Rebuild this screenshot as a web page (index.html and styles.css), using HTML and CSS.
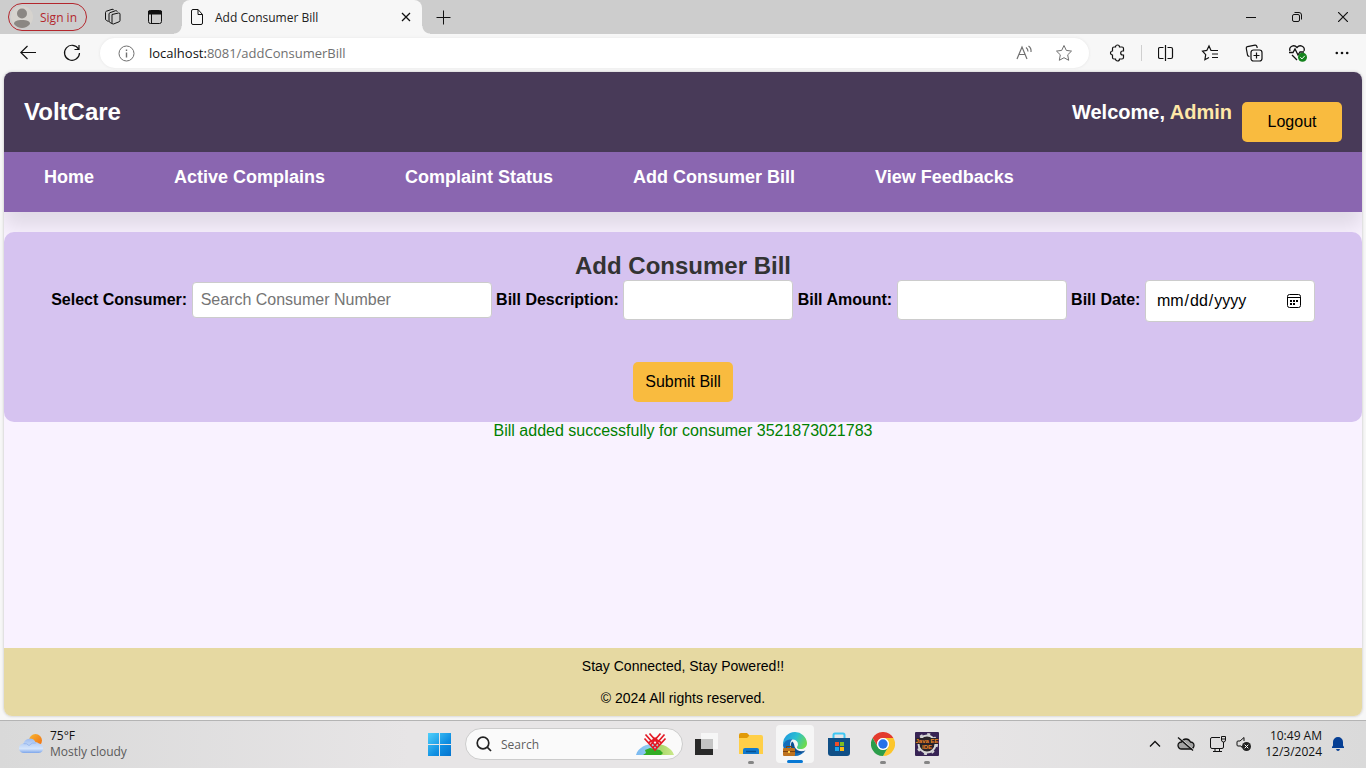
FILE: index.html
```html
<!DOCTYPE html>
<html lang="en">
<head>
<meta charset="utf-8">
<title>Add Consumer Bill</title>
<link rel="stylesheet" href="styles.css">
</head>
<body>
<div class="desktop">
  <div class="tabstrip">
    <button class="signin" type="button">
      <svg width="22" height="22" viewBox="0 0 22 22"><circle cx="11" cy="11" r="11" fill="#d6d3ce"/><circle cx="11" cy="7.500" r="5" fill="#8b8783"/><path d="M3 18c0-3 3-4 8-4s8 1 8 4c-2 2.600-5 4-8 4s-6-1.400-8-4z" fill="#8b8783"/></svg>
      <span>Sign in</span>
    </button>
    <button class="strip-btn" type="button" aria-label="Workspaces">
      <svg class="line" width="18" height="18" viewBox="0 0 18 18"><path d="M8 6.500l6.500-1.500q1.500-.2 1.500 1.200v6.300q0 1-1 1.300l-5.500 2.200q-1.500.4-1.500-1.200z"/><path d="M8 15.500l-2-1q-1-.5-1-1.500V6q0-1 1-1.300l5.500-2q1.500-.3 1.800 1"/><path d="M4.500 13.500l-2-1q-1-.5-1-1.500V4.500q0-1 1-1.300L8 1.300q1.400-.3 1.800.8"/></svg>
    </button>
    <button class="strip-btn" type="button" aria-label="Tab actions">
      <svg class="line" width="16" height="16" viewBox="0 0 16 16"><rect x="1.500" y="1.500" width="13" height="13" rx="2"/><path d="M1.500 2h13v3h-13z" fill="#111"/><path d="M4.500 5v9"/></svg>
    </button>
    <div class="tab">
      <svg class="line" width="14" height="18" viewBox="0 0 14 18"><path d="M1.500 3q0-1.500 1.500-1.500h5l4.500 5V15q0 1.500-1.500 1.500H3q-1.500 0-1.500-1.500zM8 1.500v5h4.500"/></svg>
      <span class="tab-title">Add Consumer Bill</span>
      <button class="plain" type="button" aria-label="Close tab"><svg class="line" width="10" height="10" viewBox="0 0 10 10"><path d="M1 1l8 8M9 1L1 9" stroke-width="1.300"/></svg></button>
    </div>
    <button class="strip-btn" type="button" aria-label="New tab"><svg class="line" width="15" height="15" viewBox="0 0 15 15"><path d="M7.500.5v14M.5 7.500h14"/></svg></button>
    <div class="window-controls">
      <button class="win-btn" type="button" aria-label="Minimize"><svg class="line" width="10" height="10" viewBox="0 0 10 10"><path d="M0 5.500h10"/></svg></button>
      <button class="win-btn" type="button" aria-label="Restore"><svg class="line" width="10" height="10" viewBox="0 0 10 10"><rect x=".5" y="2.500" width="7" height="7" rx="1.500"/><path d="M2.500.5H7Q9.500.5 9.500 3v4.500"/></svg></button>
      <button class="win-btn" type="button" aria-label="Close"><svg class="line" width="10" height="10" viewBox="0 0 10 10"><path d="M0 0l10 10M10 0L0 10" stroke-width="1.200"/></svg></button>
    </div>
  </div>

  <div class="toolbar">
    <button class="tool-btn" type="button" aria-label="Back"><svg class="line" width="16" height="16" viewBox="0 0 16 16"><path d="M7.500 1L.8 7.500l6.700 6.500M1 7.500h15" stroke-width="1.200"/></svg></button>
    <button class="tool-btn" type="button" aria-label="Refresh"><svg class="line" width="18" height="18" viewBox="0 0 18 18"><path d="M15.600 5.200A7.500 7.500 0 1 0 16.500 9M16 1v4.500h-4.500" stroke-width="1.200"/></svg></button>
    <div class="address">
      <svg class="line grey" width="17" height="17" viewBox="0 0 17 17"><circle cx="8.500" cy="8.500" r="7.500"/><path d="M8.500 7.500v5M8.500 4.500v1.500" stroke-width="1.400"/></svg>
      <span class="url"><b>localhost:</b>8081/addConsumerBill</span>
      <svg class="line grey read" width="18" height="16" viewBox="0 0 18 16"><path d="M2 14L7 2l5 12M4 9.500h6M11 2.500q2 1.500 2 4M13.500 1q3 2 2.500 6" stroke-width="1.200"/></svg>
      <svg class="line grey" width="18" height="18" viewBox="0 0 18 18"><path d="M9 1.500l2.300 4.900 5.200.7-3.800 3.700 1 5.500L9 13.700l-4.700 2.600 1-5.500L1.500 7.100l5.200-.7z"/></svg>
    </div>
    <button class="tool-btn" type="button" aria-label="Extensions"><svg class="line" width="18" height="18" viewBox="0 0 18 18"><path d="M6 3h1.500a2 2 0 0 1 4 0h2.500q1.500 0 1.500 1.500V7h-.8a2 2 0 0 0 0 4h.8v2.500q0 1.500-1.500 1.500h-2.500a2 2 0 0 1-4 0H6q-1.500 0-1.500-1.500V11a2 2 0 1 1 0-4V4.500Q4.500 3 6 3z" stroke-width="1.200"/></svg></button>
    <span class="separator"></span>
    <button class="tool-btn" type="button" aria-label="Split screen"><svg class="line" width="16" height="16" viewBox="0 0 16 16"><path d="M5.500 2.500H2Q.5 2.500.5 4v8q0 1.500 1.500 1.500h3.500M9.500 2.500H13q1.500 0 1.500 1.500v8q0 1.500-1.500 1.500H9.500M7.500 0v16" stroke-width="1.200"/></svg></button>
    <button class="tool-btn" type="button" aria-label="Favorites"><svg class="line" width="18" height="18" viewBox="0 0 18 18"><path d="M11.500 6.500H10L8 2 5.800 6.400l-4.300.7 3.200 3.600-.8 5L8 13.400M11.500 6.500H17M11 10h6M11 13.500h6" stroke-width="1.200"/></svg></button>
    <button class="tool-btn" type="button" aria-label="Collections"><svg class="line" width="18" height="18" viewBox="0 0 18 18"><rect x="6" y="6" width="11" height="11" rx="2.500" stroke-width="1.200"/><path d="M11.500 8.500v6M8.500 11.500h6M4.500 12.500q-1.700-.2-2-1.500L1.300 4.500Q1 3 2.500 2.700l7.500-1.500q1.500-.2 1.900 1.300l.3 1.500" stroke-width="1.200"/></svg></button>
    <button class="tool-btn" type="button" aria-label="Browser essentials"><svg class="line" width="20" height="18" viewBox="0 0 20 18"><path d="M2 7C.5 2.500 6 0 9 3.500 12 0 17.500 2.500 16 7M1 8.500h4l2-3.500 3 6 2-3h4M4 11l5 5" stroke-width="1.300"/><circle cx="14.500" cy="13.200" r="4.500" fill="#14831d" stroke="none"/><path d="M12.300 13.300l1.700 1.600 2.800-3.100" stroke="#fff"/></svg></button>
    <button class="tool-btn" type="button" aria-label="Settings"><svg width="14" height="4" viewBox="0 0 14 4" fill="#111"><circle cx="1.800" cy="2" r="1.300"/><circle cx="7" cy="2" r="1.300"/><circle cx="12.200" cy="2" r="1.300"/></svg></button>
  </div>

  <main class="page">
    <header class="site-header">
      <h1 class="logo">VoltCare</h1>
      <p class="welcome">Welcome, <span class="user">Admin</span></p>
      <button class="btn logout" type="button">Logout</button>
    </header>
    <nav class="site-nav">
      <a href="#">Home</a>
      <a href="#">Active Complains</a>
      <a href="#">Complaint Status</a>
      <a href="#">Add Consumer Bill</a>
      <a href="#">View Feedbacks</a>
    </nav>
    <form class="bill-form">
      <h2>Add Consumer Bill</h2>
      <div class="fields">
        <label for="consumer">Select Consumer:</label>
        <input id="consumer" class="search" type="text" placeholder="Search Consumer Number">
        <label for="description">Bill Description:</label>
        <input id="description" class="field" type="text">
        <label for="amount">Bill Amount:</label>
        <input id="amount" class="field" type="text">
        <label for="date">Bill Date:</label>
        <input id="date" class="field date" type="date">
      </div>
      <button class="btn" type="button">Submit Bill</button>
    </form>
    <p class="message">Bill added successfully for consumer 3521873021783</p>
    <footer class="site-footer">
      <p>Stay Connected, Stay Powered!!</p>
      <p>© 2024 All rights reserved.</p>
    </footer>
  </main>

  <div class="taskbar">
    <div class="weather">
      <svg width="26" height="22" viewBox="0 0 26 22">
        <defs><linearGradient id="cloud" x1="0" y1="0" x2="0" y2="1"><stop offset="0" stop-color="#9dbcf0"/><stop offset=".7" stop-color="#d5e5fb"/><stop offset="1" stop-color="#7ea6ea"/></linearGradient><linearGradient id="sun" x1="0" y1="0" x2="1" y2="1"><stop offset="0" stop-color="#f8b731"/><stop offset="1" stop-color="#ef6a10"/></linearGradient></defs>
        <circle cx="17.500" cy="7.500" r="6.500" fill="url(#sun)"/><path d="M6 20a4.800 4.800 0 0 1-.5-9.600A6.500 6.500 0 0 1 17.500 9a5 5 0 0 1 3.500 1.500 4.800 4.800 0 0 1 0 9.500z" fill="url(#cloud)"/><path d="M5.500 10.600q3.500-.6 5.500 1.900 3-3.500 7-2.500" fill="none" stroke="#9ab9ee"/>
      </svg>
      <div class="weather-text"><span>75°F</span><span class="muted">Mostly cloudy</span></div>
    </div>
    <div class="apps">
      <button class="app" type="button" aria-label="Start"><svg width="23" height="23" viewBox="0 0 23 23"><defs><linearGradient id="win" x1="0" y1="0" x2="1" y2="1"><stop offset="0" stop-color="#4fd0fb"/><stop offset=".6" stop-color="#0f8fe2"/><stop offset="1" stop-color="#0573ce"/></linearGradient></defs><path fill="url(#win)" d="M0 0h11v11H0zM12 0h11v11H12zM0 12h11v11H0zM12 12h11v11H12z"/></svg></button>
      <label class="search-box">
        <svg width="16" height="16" viewBox="0 0 16 16" fill="none" stroke="#222" stroke-width="1.700"><circle cx="7" cy="7" r="5.800"/><path d="M11.200 11.200L15 15"/></svg>
        <input type="text" placeholder="Search" aria-label="Search">
        <svg width="38" height="24" viewBox="0 0 38 24"><defs><linearGradient id="globe"><stop offset="0" stop-color="#79b8f1"/><stop offset=".5" stop-color="#9ed5ef"/><stop offset=".65" stop-color="#aad86b"/><stop offset="1" stop-color="#cbe98a"/></linearGradient></defs><path d="M0 23C4 8 33 8 38 23z" fill="url(#globe)"/><path d="M7 23l3-2-1-3 5-2 10 2 3 3-2 2z" fill="#32ad25"/><path d="M8.500 6.500L19 18 29.500 6.500M9.500 2.500L21 15.500M13.500 1.500L23 12.500M28.500 2.500L17 15.500M24.500 1.500L15 12.500M17 5.500l8 5M21 5.500l-8 5" fill="none" stroke="#e31824" stroke-width="1.700"/></svg>
      </label>
      <button class="app" type="button" aria-label="Task view"><svg width="24" height="24" viewBox="0 0 24 24"><path d="M0 7h18v16H0z" fill="#292929"/><path d="M6 1h17v16H6z" fill="#fafafa" opacity=".8"/><path d="M6 7h12v10H6z" fill="#c4c4c4"/></svg></button>
      <button class="app running" type="button" aria-label="File Explorer"><svg width="24" height="24" viewBox="0 0 24 24"><path d="M0 3q0-2 2-2h6l3 3-3 3H0z" fill="#e19a08"/><path d="M0 6h8l3-3h11q2 0 2 2v17H0z" fill="#ffcf48"/><path d="M4 22v-4q0-2 2-2h12q2 0 2 2v4z" fill="#127ace"/><path d="M7 19.500h10" stroke="#075193" stroke-width="1.500"/></svg></button>
      <button class="app active" type="button" aria-label="Microsoft Edge"><svg width="24" height="24" viewBox="0 0 24 24"><defs><linearGradient id="edge" x1="0" y1=".2" x2="1" y2=".6"><stop offset="0" stop-color="#1f97df"/><stop offset=".5" stop-color="#2abfd2"/><stop offset="1" stop-color="#6edb4c"/></linearGradient></defs><path d="M12 0a12 12 0 0 1 12 11c0 4-3 6-6.500 6-2.500 0-4-1-3.500-2 2-2.500 1-7-4-7.500C5.500 7 1.500 9 0 13A12 12 0 0 1 12 0z" fill="url(#edge)"/><path d="M0 13C1 9 5 6.500 9.500 7.300 7 9 6 14 9 18s9 4.500 13.500.5C20 22 16 24 12 24A12 12 0 0 1 0 13z" fill="#116dbc"/><path d="M9 9.500c-2 3-1.500 8 2 10.500s8 2 11.500-1.500c-4 1.500-9 .5-10.500-3-1-2.300-.5-4.500-3-6z" fill="#0b4f93"/><rect x="0" y="16" width="12" height="8" rx="1" fill="#be721f"/><path d="M0 19.500h12M3.500 16v-1.500h5V16" fill="none" stroke="#7d430d"/><path d="M5 19h2v2H5z" fill="#ffd34b"/></svg></button>
      <button class="app" type="button" aria-label="Microsoft Store"><svg width="24" height="25" viewBox="0 0 24 25"><path d="M1 6h22v15q0 3-3 3H4q-3 0-3-3z" fill="#104f86"/><path d="M6.500 6V3q0-1.500 1.500-1.500h8q1.500 0 1.500 1.500v3" fill="none" stroke="#3ec7f3" stroke-width="2"/><path d="M8 10h4v4H8z" fill="#f04e28"/><path d="M13 10h4v4h-4z" fill="#7ebc22"/><path d="M8 15h4v4H8z" fill="#1aa5ef"/><path d="M13 15h4v4h-4z" fill="#fcb913"/></svg></button>
      <button class="app running" type="button" aria-label="Google Chrome"><svg width="24" height="24" viewBox="0 0 24 24"><path d="M1.600 6A12 12 0 0 1 22.400 6H12a6 6 0 0 0-5.200 9z" fill="#e33b2e"/><path d="M22.400 6A12 12 0 0 1 12 24l5.200-9A6 6 0 0 0 12 6z" fill="#fcc62c"/><path d="M12 24A12 12 0 0 1 1.600 6l5.200 9a6 6 0 0 0 10.400 0z" fill="#2c9d4a"/><circle cx="12" cy="12" r="6" fill="#fff"/><circle cx="12" cy="12" r="4.700" fill="#2872e8"/></svg></button>
      <button class="app running" type="button" aria-label="Java EE IDE"><svg width="24" height="24" viewBox="0 0 24 24"><rect width="24" height="24" rx="1" fill="#372354"/><circle cx="12" cy="12" r="8.500" fill="#292329" stroke="#d5d5d5" stroke-width="2"/><circle cx="12" cy="12" r="10" fill="none" stroke="#d5d5d5" stroke-width="2" stroke-dasharray="3 4.850"/><path d="M1 6h22v6H1z" fill="#292329"/><g class="ide"><text x="12" y="11" text-anchor="middle">Java EE</text><text x="12" y="17" text-anchor="middle">IDE</text></g></svg></button>
    </div>
    <div class="tray">
      <svg class="line" width="12" height="8" viewBox="0 0 12 8"><path d="M1 6.500l5-5 5 5" stroke-width="1.300"/></svg>
      <svg class="line" width="18" height="14" viewBox="0 0 18 14"><path d="M4.500 12a3.500 3.500 0 0 1 0-7Q6 2 9 2t4.500 3a3.500 3.500 0 0 1 0 7z" fill="#a3a3a3" stroke-width="1.300"/><path d="M2 0l15 13" stroke="#dcdcdc"/><path d="M1 .5l15 13" stroke-width="1.300"/></svg>
      <svg class="line" width="18" height="18" viewBox="0 0 18 18"><path d="M11 2.500H3q-1.500 0-1.500 1.500v8q0 1.500 1.500 1.500h10q1.500 0 1.500-1.500V8M6 13.500v3M10.500 13.500v3M4 16.500h9M14.500 7v3M12.500 1.500h4V5q0 2-2 2t-2-2zM12.500 4h4"/></svg>
      <svg class="line" width="16" height="16" viewBox="0 0 16 16"><path d="M5 10H2q-1 0-1-1V6q0-1 1-1h2l4-3.500V5M5 10l1.500 2"/><circle cx="10.500" cy="10.500" r="4.500" fill="#222" stroke="none"/><path d="M8.700 8.700l3.600 3.600M12.300 8.700l-3.600 3.600" stroke="#fff"/></svg>
      <div class="clock"><span>10:49 AM</span><span>12/3/2024</span></div>
      <svg width="14" height="16" viewBox="0 0 14 16"><path d="M1 12v-1l1-1.500V6a5 5 0 0 1 10 0v3.500l1 1.500v1zM5 13h4q-.5 2-2 2t-2-2z" fill="#063f94"/></svg>
    </div>
  </div>
</div>
</body>
</html>
```
FILE: styles.css
```css
* { box-sizing: border-box; }
body, h1, h2, p { margin: 0; }
body { font-family: "Liberation Sans", Arial, sans-serif; font-size: 16px; background: #f7f7f7; }
button, input { font: inherit; color: inherit; }
svg { flex: none; display: block; }
.desktop { display: flex; flex-direction: column; min-height: 100vh; }
.line { fill: none; stroke: #111; }
.grey { stroke: #707070; }
.plain, .strip-btn, .win-btn, .tool-btn, .app { display: flex; align-items: center; justify-content: center; padding: 0; border: 0; background: none; }

/* Browser chrome */
.tabstrip, .toolbar, .taskbar { font-family: "Open Sans", "Noto Sans", sans-serif; font-size: 12px; }
.tabstrip { display: flex; align-items: center; height: 34px; padding-left: 8px; background: #cdcdcd; }
.signin { display: flex; align-items: center; gap: 7px; width: 79px; height: 28px; padding: 0 0 0 2px; border: 1px solid #b3272d; border-radius: 14px; background: none; color: #b3272d; white-space: nowrap; }
.strip-btn { width: 42px; height: 34px; }
.signin + .strip-btn { margin-left: 5px; }
.tab { position: relative; display: flex; align-items: center; gap: 11px; width: 240px; height: 34px; margin-left: 6px; padding: 0 11px 0 8px; border-radius: 8px 8px 0 0; background: #f7f7f7; color: #222; }
.tab::before, .tab::after { content: ""; position: absolute; bottom: 0; width: 8px; height: 8px; }
.tab::before { right: 100%; background: radial-gradient(circle at 0 0, #cdcdcd 7px, #f7f7f7 8px); }
.tab::after { left: 100%; background: radial-gradient(circle at 100% 0, #cdcdcd 7px, #f7f7f7 8px); }
.tab-title { flex: 1; white-space: nowrap; }
.window-controls { display: flex; margin-left: auto; }
.win-btn { width: 46px; height: 34px; }
.toolbar { display: flex; align-items: center; height: 38px; padding: 0 2px 0 6px; }
.tool-btn { width: 44px; height: 36px; }
.separator { width: 1px; height: 16px; margin: 0 2px; background: #cfcfcf; }
.address { display: flex; align-items: center; gap: 14px; flex: 1; height: 30px; margin: 0 6px; padding: 0 16px 0 18px; border-radius: 15px; background: #fff; box-shadow: 0 0 3px #e4e4e4; }
.url { flex: 1; font-size: 13px; color: #707070; }
.url b { font-weight: 400; color: #111; }
.read { margin-right: 8px; }

/* Site */
.page { display: flex; flex-direction: column; flex: 1; margin: 0 4px 4px; overflow: hidden; border-radius: 8px; background: #f9f2ff; box-shadow: 0 0 3px #bbb; }
.site-header { display: flex; align-items: center; height: 80px; padding: 0 20px; background: #483a58; color: #fff; }
.logo { flex: 1; font-size: 24px; }
.welcome { margin-right: 10px; font-size: 20px; font-weight: 700; }
.user { color: #ffe8a8; }
.btn { width: 100px; height: 40px; padding: 0; border: 0; border-radius: 5px; background: #f9bb3f; color: #000; }
.logout { margin-top: 20px; }
.site-nav { display: flex; gap: 80px; height: 60px; padding: 15px 40px; background: #8a66b0; box-shadow: 0 15px 20px rgba(0, 0, 0, .1); }
.site-nav a { color: #fff; font-size: 18px; line-height: 20px; font-weight: 700; text-decoration: none; }
.bill-form { position: relative; margin-top: 20px; padding: 20px; border-radius: 10px; background: #d6c3f0; text-align: center; }
.bill-form h2 { font-size: 24px; line-height: 28px; color: #333; }
.bill-form .btn { display: block; margin: 0 auto; }
.fields { margin-bottom: 40px; }
.fields label { font-weight: 700; white-space: nowrap; }
.fields input { border: 1px solid #ccc; border-radius: 4px; background: #fff; }
.search { width: 300px; height: 36px; padding: 8px; }
.field { width: 170px; height: 40px; padding: 10px; }
.date { height: 42px; vertical-align: middle; }
.date::-webkit-calendar-picker-indicator { width: 16px; height: 16px; padding: 2px; background: url("data:image/svg+xml,%3Csvg xmlns='http://www.w3.org/2000/svg' viewBox='0 0 16 16' fill='none' stroke='%23000'%3E%3Crect x='1.5' y='1.5' width='13' height='13' rx='2'/%3E%3Cpath d='M1.500 4.500h13'/%3E%3Cpath d='M4 8h8M4 11h5' stroke-width='2' stroke-dasharray='2 1'/%3E%3C/svg%3E") center / 16px 16px no-repeat; }
.message { line-height: 18px; color: #008000; text-align: center; }
.site-footer { display: flex; flex-direction: column; gap: 16px; margin-top: auto; padding: 10px; background: #e6d9a2; font-size: 14px; line-height: 16px; text-align: center; }

/* Taskbar */
.taskbar { display: grid; grid-template-columns: 1fr auto 1fr; align-items: center; height: 48px; border-top: 1px solid #b4b4b4; padding-bottom: 1px; background: linear-gradient(90deg, #d9d9d9, #e7e5e6 30%, #e7e5e6 70%, #dadada); color: #111; }
.weather { display: flex; align-items: center; gap: 6px; padding-left: 18px; }
.weather-text, .clock { display: flex; flex-direction: column; line-height: 16px; }
.muted { color: #5a5a5a; }
.apps { display: flex; align-items: center; }
.app { position: relative; width: 44px; height: 40px; }
.app.active { width: 38px; height: 38px; margin: 0 3px; border-radius: 4px; background: #f6f6f6; }
.app.running::after, .app.active::after { content: ""; position: absolute; bottom: 0; width: 6px; height: 3px; border-radius: 2px; background: #858585; }
.app.active::after { width: 16px; background: #0878d4; }
.ide { font: 700 6px "Liberation Sans", Arial, sans-serif; fill: #f08624; }
.search-box { display: flex; align-items: center; gap: 9px; width: 218px; height: 32px; margin: 0 2px 0 4px; padding: 0 8px 0 10px; border: 1px solid #ccc; border-radius: 16px; background: #fafafa; }
.search-box input { flex: 1; min-width: 0; padding: 0; border: 0; background: none; }
.search-box input::placeholder { color: #5e5e5e; }
.tray { display: flex; align-items: center; justify-content: flex-end; gap: 9px; padding-right: 21px; }
.tray svg:nth-child(1) { margin-right: 7px; }
.tray svg:nth-child(2) { margin-right: 5px; }
.clock { margin-left: 4px; text-align: right; }
```
